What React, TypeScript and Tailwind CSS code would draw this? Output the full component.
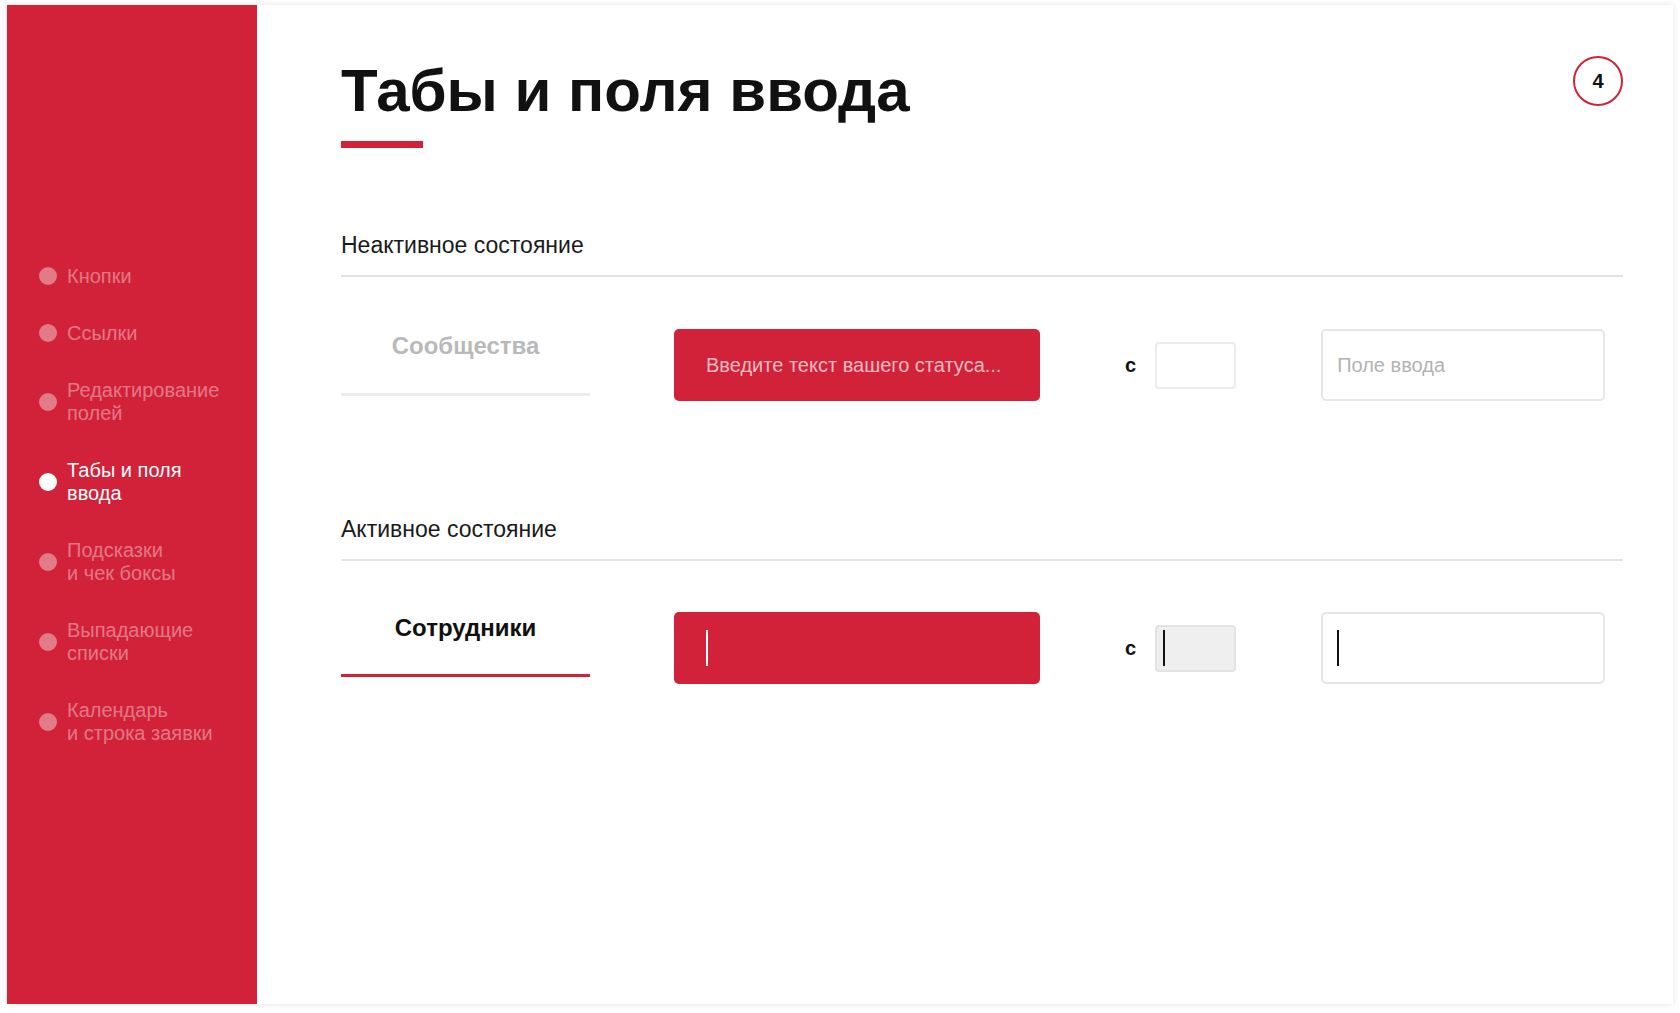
import React from "react";

const navItems = [
  { label: ["Кнопки"], active: false },
  { label: ["Ссылки"], active: false },
  { label: ["Редактирование", "полей"], active: false },
  { label: ["Табы и поля", "ввода"], active: true },
  { label: ["Подсказки", "и чек боксы"], active: false },
  { label: ["Выпадающие", "списки"], active: false },
  { label: ["Календарь", "и строка заявки"], active: false },
];

function Sidebar() {
  return (
    <nav className="w-[250px] shrink-0 bg-[#d12239] flex flex-col justify-center pl-[32px]">
      <ul className="flex flex-col gap-[34px]">
        {navItems.map((item) => (
          <li key={item.label.join(" ")} className="flex items-center gap-[10px]">
            <span
              className={`w-[18px] h-[18px] rounded-full shrink-0 ${
                item.active ? "bg-white" : "bg-white/40"
              }`}
            />
            <span
              className={`text-[20px] leading-[23px] ${
                item.active ? "text-white" : "text-white/40"
              }`}
            >
              {item.label.map((line) => (
                <span key={line} className="block">
                  {line}
                </span>
              ))}
            </span>
          </li>
        ))}
      </ul>
    </nav>
  );
}

function SectionTitle({ children }: { children: React.ReactNode }) {
  return (
    <div>
      <h2 className="text-[23px] leading-[28px] text-[#1a1a1a]">{children}</h2>
      <div className="mt-[16px] h-[2px] bg-[#e3e3e3]" />
    </div>
  );
}

function Cursor({ white }: { white?: boolean }) {
  return (
    <span
      className={`inline-block w-[2px] h-[36px] ${white ? "bg-white" : "bg-[#111]"}`}
    />
  );
}

function FieldRow({ active }: { active: boolean }) {
  return (
    <div className="flex items-start">
      <div
        className={`w-[249px] text-center text-[24px] font-bold border-b-[3px] ${
          active
            ? "text-[#111] border-[#d12239] h-[65px] pt-[3px] leading-[26px]"
            : "text-[#b9b9b9] border-[#ededed] h-[67px] pt-[3px] leading-[28px]"
        }`}
      >
        {active ? "Сотрудники" : "Сообщества"}
      </div>

      <div className="ml-[84px] w-[366px] h-[72px] rounded-[5px] bg-[#d12239] flex items-center pl-[32px]">
        {active ? (
          <Cursor white />
        ) : (
          <span className="text-[20px] text-white/70">
            Введите текст вашего статуса...
          </span>
        )}
      </div>

      <div className="ml-[85px] h-[72px] flex items-center">
        <span className="text-[20px] font-bold text-[#111]">с</span>
        <div
          className={`ml-[19px] w-[81px] h-[47px] rounded-[4px] border-2 flex items-center pl-[6px] ${
            active ? "bg-[#efefef] border-[#e3e3e3]" : "bg-white border-[#ececec]"
          }`}
        >
          {active && <Cursor />}
        </div>
      </div>

      <div className="ml-[85px] w-[284px] h-[72px] rounded-[5px] border-2 border-[#e6e6e6] bg-white flex items-center pl-[14px]">
        {active ? (
          <Cursor />
        ) : (
          <span className="text-[20px] text-[#b3b3b3]">Поле ввода</span>
        )}
      </div>
    </div>
  );
}

export default function App() {
  return (
    <div
      className="min-h-screen bg-white pt-[5px] pl-[7px]"
      style={{ fontFamily: '"Liberation Sans", Arial, sans-serif' }}
    >
      <div className="w-[1666px] h-[999px] flex bg-white shadow-[0_0_6px_rgba(0,0,0,0.12)]">
        <Sidebar />
        <main className="flex-1 pl-[84px] pr-[50px] pt-[51px]">
          <header className="flex justify-between items-start">
            <div className="pt-[5px]">
              <h1 className="text-[60px] leading-[60px] font-bold text-[#111]">
                Табы и поля ввода
              </h1>
              <div className="mt-[20px] w-[82px] h-[7px] bg-[#d12239]" />
            </div>
            <div className="w-[50px] h-[50px] rounded-full border-2 border-[#d12239] flex items-center justify-center text-[20px] font-bold text-[#111]">
              4
            </div>
          </header>

          <section className="mt-[83px]">
            <SectionTitle>Неактивное состояние</SectionTitle>
            <div className="mt-[52px]">
              <FieldRow active={false} />
            </div>
          </section>

          <section className="mt-[114px]">
            <SectionTitle>Активное состояние</SectionTitle>
            <div className="mt-[51px]">
              <FieldRow active />
            </div>
          </section>
        </main>
      </div>
    </div>
  );
}
